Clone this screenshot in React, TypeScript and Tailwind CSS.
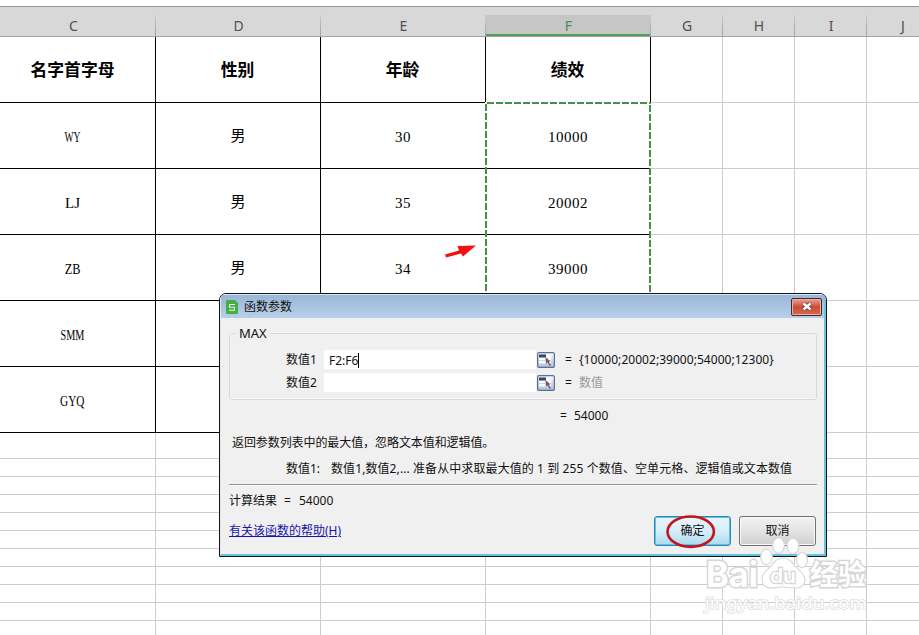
import React from 'react';

interface PersonRow {
  initials: string;
  squeeze: string;
  gender?: string;
  age?: string;
  score?: string;
}

const people: PersonRow[] = [
  { initials: 'WY', squeeze: 'scale-x-[0.64]', gender: '男', age: '30', score: '10000' },
  { initials: 'LJ', squeeze: 'scale-x-100', gender: '男', age: '35', score: '20002' },
  { initials: 'ZB', squeeze: 'scale-x-[0.82]', gender: '男', age: '34', score: '39000' },
  { initials: 'SMM', squeeze: 'scale-x-[0.68]' },
  { initials: 'GYQ', squeeze: 'scale-x-[0.75]' },
];

const columns = ['C', 'D', 'E', 'F', 'G', 'H', 'I', 'J'];
const titles = ['名字首字母', '性别', '年龄', '绩效'];
const emptyRows = [26, 18, 18, 18, 18, 18, 18, 18, 18, 18, 18];
const gridCols = 'grid grid-cols-[156px_165px_165px_165px_72px_72px_72px_72px]';

const ColumnHeader = () => (
  <div className={`${gridCols} h-[31px] pt-[8px] bg-[#d8d8d8] border-t border-b border-t-[#969696] border-b-[#a3a3a3]`}>
    {columns.map((name) => {
      const active = name === 'F';
      return (
        <div
          key={name}
          className={`relative h-[21px] text-center text-[14px] leading-[22px] ${
            active ? 'bg-[#c6c6c6] text-[#4f8a50] border-b-2 border-[#55a058]' : 'text-[#505050]'
          } ${name === 'C' ? 'pr-[9px]' : ''}`}
        >
          {name}
          <span className="absolute right-0 top-0 w-px h-[21px] bg-linear-to-b from-[#cacaca] to-[#a0a0a0]" />
        </div>
      );
    })}
  </div>
);

const EmptyCells = ({ count }: { count: number }) => (
  <>
    {Array.from({ length: count }, (_, i) => (
      <div key={i} className="border-r border-b border-[#cdcdcd]" />
    ))}
  </>
);

const Sheet = () => (
  <div className="w-[939px] pt-[6px]">
    <ColumnHeader />
    <div className={`${gridCols} h-[66px]`}>
      {titles.map((title, i) => (
        <div
          key={title}
          className={`flex items-center justify-center border-r border-b border-black pt-px text-[16.8px] leading-5 font-bold ${i === 0 ? 'pr-[10px]' : 'pr-px'}`}
        >
          <span className="whitespace-nowrap">{title}</span>
        </div>
      ))}
      <EmptyCells count={4} />
    </div>
    {people.map((p) => (
      <div key={p.initials} className={`${gridCols} h-[66px] font-['Liberation_Serif','Noto_Sans_CJK_SC',serif] text-[15px] leading-5`}>
        <div className="flex items-center justify-center border-r border-b border-black pt-[2px] pr-[10px]">
          <span className={p.squeeze}>{p.initials}</span>
        </div>
        <div className="flex items-center justify-center border-r border-b border-black">{p.gender}</div>
        <div className="flex items-center justify-center border-r border-b border-black pt-[2px] tracking-[0.5px]">{p.age}</div>
        <div className="flex items-center justify-center border-r border-b border-black pt-[2px] tracking-[0.5px]">{p.score}</div>
        <EmptyCells count={4} />
      </div>
    ))}
    {emptyRows.map((height, i) => (
      <div key={i} className={gridCols} style={{ height }}>
        <EmptyCells count={8} />
      </div>
    ))}
  </div>
);

const Selection = () => (
  <svg className="absolute left-[485px] top-[102px]" width="166" height="200" fill="none" strokeWidth="2">
    <path d="M1 200V1H165V200" stroke="#fff" />
    <path d="M1 2V200" stroke="#459049" strokeDasharray="7 2" />
    <path d="M2 1H166" stroke="#459049" strokeDasharray="7 2" />
    <path d="M165 3V200" stroke="#459049" strokeDasharray="7 2" />
  </svg>
);

const PickerButton = () => (
  <svg width="18" height="16" viewBox="0 0 18 16">
    <defs>
      <linearGradient id="picker" x1="0" y1="0" x2="0" y2="1">
        <stop offset="0" stopColor="#f4f8ff" />
        <stop offset="1" stopColor="#a9bfdf" />
      </linearGradient>
    </defs>
    <rect x="0.6" y="0.6" width="16.8" height="14.8" rx="1.5" fill="url(#picker)" stroke="#5b7090" strokeWidth="1.2" />
    <rect x="2" y="2.5" width="12" height="9" fill="#f8fbff" />
    <path d="M2 2.5h7v3H2z" fill="#38435f" />
    <path d="M2 8.5h12M8.5 5.5v6" stroke="#cbd7e8" strokeWidth="1" />
    <path d="M8.500 5l5 4.500-1.800.3 2.300 3.200-1.400.8-2-3.300-1.300 1.500z" fill="#84545a" />
  </svg>
);

const ArgumentRow = ({ label, value, result, muted }: { label: string; value?: string; result: string; muted?: boolean }) => (
  <div className="flex items-center h-[19px]">
    <span className="w-[38px]">{label}</span>
    <div className="flex items-center w-[212px] h-[19px] bg-white pl-[5px] pt-[2px]">
      {value}
      {value && <span className="w-px h-[15px] bg-black" />}
    </div>
    <div className="ml-px">
      <PickerButton />
    </div>
    <span className="ml-[10px] w-[14px]">=</span>
    <span className={muted ? 'text-[#999]' : 'tracking-[0.04px]'}>{result}</span>
  </div>
);

const FunctionDialog = () => (
  <div className="absolute left-[219px] top-[293px] w-[608px] h-[264px] flex flex-col rounded-t-[7px] border border-[#10151b] bg-[#f0f0f0] overflow-hidden text-[12px] leading-[16px] text-[#111] whitespace-nowrap">
    <div className="flex-1 flex flex-col border-l border-r-2 border-b-2 border-t border-l-[#e2eaf0] border-r-[#68c3dc] border-b-[#68c3dc] border-t-[#dce8f4]">
      <div className="shrink-0 flex items-center h-[23px] pl-[5px] pr-[2px] bg-linear-to-b from-[#9bb7d5] to-[#b8cfe9]">
        <svg width="12" height="14" viewBox="0 0 12 14">
          <path d="M1 0h8l3 3v10l-1 1H1l-1-1V1z" fill="#43ae47" />
          <path d="M9 4.500H3.500v2.700H8.500v3H3" fill="none" stroke="#e9ffe9" strokeWidth="1.1" />
        </svg>
        <span className="ml-[6px]">函数参数</span>
        <button className="ml-auto flex items-center justify-center w-[31px] h-[18px] rounded-[2px] border border-[#49252b] bg-linear-to-b from-[#e7a092] via-[#cb4b37] via-50% to-[#d56a50] shadow-[inset_0_0_0_1px_#e9b0a6]">
          <svg width="12" height="9" viewBox="0 0 12 9">
            <path d="M2.5 1.5l7 6M9.5 1.5l-7 6" stroke="#5f3b42" strokeWidth="4" />
            <path d="M2.5 1.5l7 6M9.5 1.5l-7 6" stroke="#fff" strokeWidth="2.4" />
          </svg>
        </button>
      </div>

      <div className="flex flex-col pl-2 pr-[7px] pt-[7px]">
        <fieldset className="h-[75px] rounded-[3px] border border-[#d8d8d8] shadow-[inset_0_-1px_0_#fafafa] pl-[56px]">
          <legend className="-ml-[50px] px-[3px] text-[13px]">MAX</legend>
          <div className="flex flex-col gap-[4px] pt-[9px]">
            <ArgumentRow label="数值1" value="F2:F6" result="{10000;20002;39000;54000;12300}" />
            <ArgumentRow label="数值2" result="数值" muted />
          </div>
        </fieldset>
        <div className="flex mt-[8px] pl-[331px]">
          <span className="w-[14px]">=</span>
          <span>54000</span>
        </div>
        <div className="mt-[11px] pl-[3px] tracking-[-0.08px]">返回参数列表中的最大值，忽略文本值和逻辑值。</div>
        <div className="flex mt-[10px] pl-[57px]">
          <span className="w-[45px]">数值1:</span>
          <span className="tracking-[0.09px]">数值1,数值2,... 准备从中求取最大值的 1 到 255 个数值、空单元格、逻辑值或文本数值</span>
        </div>
        <div className="mt-[7px] h-[2px] border-t border-b border-t-[#969696] border-b-white" />
        <div className="flex mt-[7px]">
          <span className="w-[55px]">计算结果</span>
          <span className="w-[15px]">=</span>
          <span>54000</span>
        </div>
        <div className="flex justify-between mt-[7px] pr-px">
          <a href="#" className="mt-[7px] h-4 text-[#1914a8] underline">有关该函数的帮助(H)</a>
          <div className="flex gap-[8px]">
            <button className="w-[77px] h-[30px] rounded-[3px] border border-[#2f86b0] bg-linear-to-b from-[#e9f5fb] via-[#d8eef9] via-50% to-[#a9daf0] shadow-[inset_0_0_0_1px_#5fc4e4]">确定</button>
            <button className="w-[77px] h-[30px] rounded-[3px] border border-[#707070] bg-linear-to-b from-[#f2f2f2] via-[#e4e4e4] via-50% to-[#cfcfcf] shadow-[inset_0_0_0_1px_#fafafa]">取消</button>
          </div>
        </div>
      </div>
    </div>
  </div>
);

const Annotations = () => (
  <>
    <svg className="absolute left-[444px] top-[244px]" width="33" height="15" viewBox="0 0 33 15">
      <path d="M1 10.5L15 6.5L13.5 2L32 1.5L19 12.5L17 9.5L2 13.5z" fill="#f01111" />
    </svg>
    <svg className="absolute left-[664px] top-[513px]" width="54" height="38" viewBox="0 0 54 38">
      <ellipse cx="26.7" cy="18.7" rx="23.2" ry="15.2" fill="none" stroke="#c4151d" strokeWidth="2.6" />
    </svg>
  </>
);

const Watermark = () => (
  <svg className="absolute left-[700px] top-[534px]" width="175" height="82" viewBox="0 0 175 82" fill="#fff" stroke="#d6d6d6" strokeWidth="1.2">
    <g fontFamily="Inter, 'Noto Sans CJK SC', sans-serif" fontWeight="700" paintOrder="stroke" strokeWidth="3">
      <text x="6" y="53" fontSize="35" textLength="52" lengthAdjust="spacingAndGlyphs">Bai</text>
      <text x="110" y="51" fontSize="28" textLength="56" lengthAdjust="spacingAndGlyphs">经验</text>
    </g>
    <ellipse cx="66.5" cy="23" rx="5.8" ry="7.8" />
    <ellipse cx="78.5" cy="11.5" rx="5.8" ry="7.8" />
    <ellipse cx="93" cy="12" rx="5.8" ry="7.8" />
    <ellipse cx="102" cy="26" rx="5.5" ry="7.5" />
    <path d="M83 24c6 0 9 4 12 8 4 5 10 7 10 14 0 5-4 8-9 8-5 0-8-1-13-1s-8 1-12 1c-6 0-9-4-9-9 0-6 5-9 9-13 3-4 6-8 12-8z" />
    <text x="70" y="49" fontSize="20" fontWeight="600" fontFamily="Inter, sans-serif" paintOrder="stroke" strokeWidth="2.4" textLength="26" lengthAdjust="spacingAndGlyphs">du</text>
    <text x="5" y="75" fontSize="17" fontFamily="'Noto Sans', sans-serif" paintOrder="stroke" stroke="#dedede" strokeWidth="1.600" textLength="162" lengthAdjust="spacingAndGlyphs">jingyan.baidu.com</text>
  </svg>
);

const App: React.FC = () => {
  return (
    <div className="relative w-[919px] h-[635px] overflow-hidden bg-white text-black font-['Noto_Sans','Noto_Sans_CJK_SC',sans-serif]">
      <Sheet />
      <Selection />
      <FunctionDialog />
      <Annotations />
      <Watermark />
    </div>
  );
};

export default App;
